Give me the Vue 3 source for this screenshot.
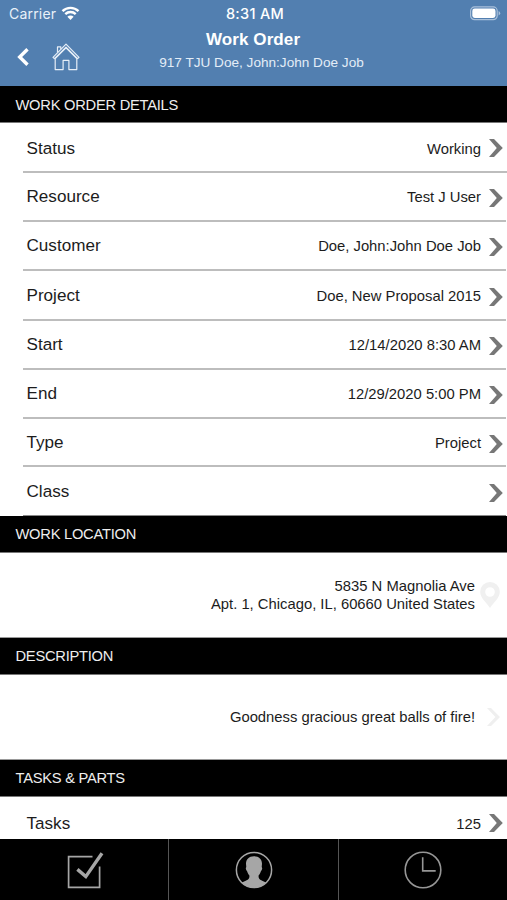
<template>
  <div class="screen">
    <header class="header">
      <div class="status-bar">
        <div class="carrier">
          <span>Carrier</span>
          <svg class="wifi" width="19" height="15" viewBox="0 0 19 15">
            <path d="M1.5 5.2a11.4 11.4 0 0 1 16 0M4.3 8.2a7.4 7.4 0 0 1 10.4 0" fill="none" stroke="#fff" stroke-width="2.4" />
            <path d="M9.5 14 6.4 10.8a4.4 4.4 0 0 1 6.2 0Z" fill="#fff" />
          </svg>
        </div>
        <span class="clock">8:31 AM</span>
        <svg class="battery" width="31" height="15" viewBox="0 0 31 15">
          <rect x=".6" y=".9" width="26.6" height="12.8" rx="4" fill="none" stroke="#a9c0da" stroke-width="1.2" />
          <rect x="2.3" y="2.6" width="23.2" height="9.4" rx="2.4" fill="#fff" />
          <path d="M28.6 5v4.6q1.6-.8 1.6-2.3T28.6 5Z" fill="#a9c0da" />
        </svg>
      </div>
      <div class="nav">
        <div class="nav-icons">
          <svg class="back" width="13" height="18" viewBox="0 0 13 18">
            <path d="M10.5 1.3 2.7 9l7.8 7.7" fill="none" stroke="#fff" stroke-width="3.4" />
          </svg>
          <svg class="home" width="28" height="28" viewBox="0 0 28 28" fill="none" stroke="#e6eef7" stroke-width="1.2" stroke-linejoin="round">
            <path d="M3.2 15.6v11h7.9v-9.3h5.8v9.3h7.9v-11L14 4.9Z" />
            <path d="M1 14.3 14 1.2l13 13.1-1.4 1.4L14 4.1 2.4 15.7Z" />
            <path d="M5.5 9.6V3.900h3.300v2.400" />
          </svg>
        </div>
        <div class="titles">
          <h1 class="title">Work Order</h1>
          <p class="subtitle">917 TJU Doe, John:John Doe Job</p>
        </div>
      </div>
    </header>

    <main class="content">
      <h2 class="section-heading first">Work Order Details</h2>
      <div class="details">
        <div v-for="row in details" :key="row.label" class="row">
          <span class="label">{{ row.label }}</span>
          <span class="value">{{ row.value }}</span>
          <svg class="chevron" width="14" height="18" viewBox="0 0 14 18">
            <path d="M0 0h5l8.8 9L5 18H0l7.8-9Z" />
          </svg>
        </div>
      </div>

      <h2 class="section-heading">Work Location</h2>
      <div class="block">
        <p class="block-text">5835 N Magnolia Ave<br />Apt. 1, Chicago, IL, 60660 United States</p>
        <svg class="pin" width="20" height="26" viewBox="0 0 20 26">
          <path fill-rule="evenodd" d="M10 0a9.8 9.8 0 0 1 9.8 9.8C19.8 16 14 20 10 26 6 20 .2 16 .2 9.8A9.8 9.8 0 0 1 10 0Zm0 5.2a4.8 4.8 0 1 0 0 9.6 4.8 4.8 0 0 0 0-9.6Z" />
        </svg>
      </div>

      <h2 class="section-heading">Description</h2>
      <div class="block">
        <p class="block-text">Goodness gracious great balls of fire!</p>
        <svg class="chevron faint" width="14" height="18" viewBox="0 0 14 18">
          <path d="M0 0h4l9 9-9 9H0l8.4-9Z" />
        </svg>
      </div>

      <h2 class="section-heading">Tasks &amp; Parts</h2>
      <div class="row tasks">
        <span class="label">Tasks</span>
        <span class="value">125</span>
        <svg class="chevron" width="14" height="18" viewBox="0 0 14 18">
          <path d="M0 0h5l8.8 9L5 18H0l7.8-9Z" />
        </svg>
      </div>
    </main>

    <nav class="tab-bar">
      <button class="tab">
        <svg width="40" height="38" viewBox="0 0 40 38" fill="none" stroke="#a6a6a6">
          <path d="M27.500 5.600H3.600v30.800h31V15.500" stroke-width="1.700" />
          <path d="m12.400 18.400 8.400 7.200L37 2.200" stroke-width="3.400" />
        </svg>
      </button>
      <button class="tab">
        <svg width="38" height="38" viewBox="0 0 38 38">
          <circle cx="19" cy="19" r="17.6" fill="none" stroke="#a6a6a6" stroke-width="1.5" />
          <path d="M19 5.200c5.200 0 8 3.300 8 7.600 0 1.300-.4 2.500-.2 3.400.8.600.3 3-.9 4-.5 2-1.500 3.200-2.300 4.200-.3 3.700 1.400 4.300 7.900 7.300a17.600 17.600 0 0 1-25 0c6.500-3 8.200-3.600 7.900-7.300-.8-1-1.800-2.200-2.300-4.200-1.200-1-1.700-3.400-.9-4 .2-.9-.2-2.100-.2-3.400 0-4.300 2.800-7.600 8-7.600Z" fill="#a6a6a6" />
        </svg>
      </button>
      <button class="tab">
        <svg width="38" height="38" viewBox="0 0 38 38" fill="none" stroke="#969696" stroke-width="1.6">
          <circle cx="19" cy="19" r="17.8" />
          <path d="M18.7 6.3v13.6h13" />
        </svg>
      </button>
    </nav>
  </div>
</template>

<script setup>
const details = [
  { label: 'Status', value: 'Working' },
  { label: 'Resource', value: 'Test J User' },
  { label: 'Customer', value: 'Doe, John:John Doe Job' },
  { label: 'Project', value: 'Doe, New Proposal 2015' },
  { label: 'Start', value: '12/14/2020 8:30 AM' },
  { label: 'End', value: '12/29/2020 5:00 PM' },
  { label: 'Type', value: 'Project' },
  { label: 'Class', value: '' },
]
</script>

<style>
body {
  margin: 0;
}
</style>

<style scoped>
.screen {
  display: flex;
  flex-direction: column;
  height: 900px;
  overflow: hidden;
  background: #fff;
  color: #1c1c1c;
  font-family: 'Liberation Sans', Arial, sans-serif;
}

.header {
  box-sizing: border-box;
  flex: none;
  height: 86px;
  background: #527fb0;
  color: #fff;
}

.status-bar {
  display: grid;
  grid-template-columns: 1fr auto 1fr;
  align-items: center;
  height: 27px;
  padding: 0 6px 0 9px;
}

.carrier {
  display: flex;
  align-items: center;
  gap: 5px;
  font-family: Inter, sans-serif;
  font-size: 14px;
  letter-spacing: 0.2px;
  color: #e9f1f9;
}

.clock {
  font-family: Inter, sans-serif;
  font-size: 14.5px;
  font-weight: 500;
  letter-spacing: 0.3px;
}

.battery {
  justify-self: end;
}

.nav {
  display: grid;
  grid-template-columns: 90px 1fr 90px;
}

.nav-icons {
  display: flex;
  align-items: center;
  gap: 22px;
  height: 59px;
  padding-left: 17px;
}

.titles {
  text-align: center;
}

.title {
  margin: 2px 1px 0 0;
  font-size: 17px;
  letter-spacing: 0.1px;
  line-height: 21px;
}

.subtitle {
  margin: 3px 0 0 16px;
  font-size: 13.6px;
  line-height: 19px;
  color: #e3edf7;
}

.content {
  flex: 1;
  min-height: 0;
}

.section-heading {
  box-sizing: border-box;
  height: 37px;
  margin: 0;
  padding-left: 15.5px;
  background: #000;
  border-bottom: 1px solid #777;
  color: #eee;
  font-size: 14.7px;
  font-weight: 400;
  letter-spacing: -0.25px;
  line-height: 37px;
  text-transform: uppercase;
}

.section-heading.first {
  line-height: 39px;
}

.row {
  box-sizing: border-box;
  display: flex;
  align-items: center;
  height: 49px;
  margin: 0 1px 0 23px;
  padding: 0 3px 0 3.5px;
  border-bottom: 2px solid #bdbdbd;
}

.details .row:first-child {
  height: 50px;
  margin-right: 0;
  padding-top: 4px;
  padding-right: 4px;
}

.details .row:nth-child(4) {
  height: 50px;
  padding-top: 1px;
}

.details .row:nth-child(7) {
  height: 48px;
  padding-top: 1px;
}

.details .row:last-child {
  padding-top: 1px;
  border-bottom: 1px solid #888;
}

.label {
  flex: 1;
  font-size: 17.1px;
}

.value {
  font-size: 14.8px;
}

.chevron {
  flex: none;
  margin: 2px 0 0 8px;
  fill: #777;
}

.details .row:first-child .chevron {
  margin-top: -2px;
}

.block {
  box-sizing: border-box;
  display: flex;
  align-items: center;
  justify-content: flex-end;
  height: 85px;
  padding-right: 7px;
  border-bottom: 1px solid #999;
}

.block-text {
  margin: 0;
  font-size: 14.8px;
  line-height: 18px;
  text-align: right;
}

.pin {
  margin-left: 5px;
  fill: #f0f0f0;
}

.chevron.faint {
  margin: 0 -1px 0 12px;
  fill: #efefef;
}

.row.tasks {
  height: 54px;
  border-bottom: 0;
}

.tasks .chevron {
  margin-top: -2px;
}

.tab-bar {
  box-sizing: border-box;
  display: flex;
  flex: none;
  height: 61px;
  background: #000;
}

.tab {
  box-sizing: border-box;
  display: flex;
  flex: 1;
  align-items: center;
  justify-content: center;
  padding: 0 0 0 1px;
  border: 0;
  background: none;
}

.tab:not(:last-child) {
  border-right: 1px solid #555;
}
</style>
